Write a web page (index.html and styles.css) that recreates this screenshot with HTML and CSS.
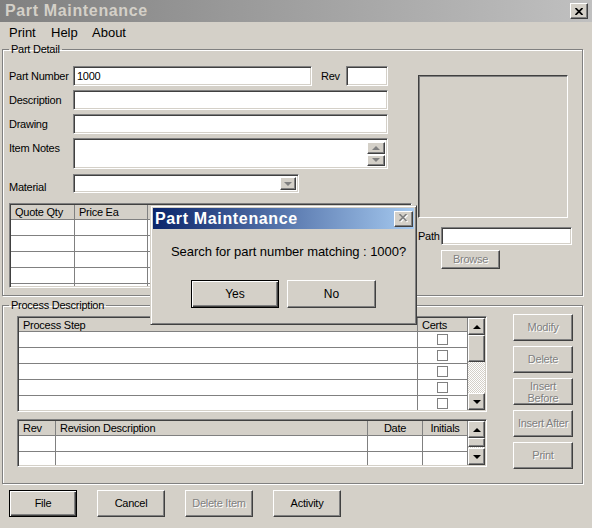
FILE: index.html
```html
<!DOCTYPE html>
<html>
<head>
<meta charset="utf-8">
<link rel="stylesheet" href="styles.css">
</head>
<body>
<div class="titlebar">
  <span class="title">Part Maintenance</span>
  <span class="close-btn raised"><svg width="8" height="7" viewBox="0 0 8 7"><path d="M0.5 0 L7.5 7 M7.5 0 L0.5 7" stroke="#000" stroke-width="1.7" fill="none"/></svg></span>
</div>
<div class="menubar">
  <span class="menu-item m-print">Print</span>
  <span class="menu-item m-help">Help</span>
  <span class="menu-item">About</span>
</div>

<fieldset class="group group-detail">
  <legend>Part Detail</legend>
  <div class="detail-body">
    <div class="detail-left">
      <div class="frow">
        <span class="flabel">Part Number</span>
        <div class="field sunken w-partno">1000</div>
        <span class="rev-label">Rev</span>
        <div class="field sunken w-rev"></div>
      </div>
      <div class="frow">
        <span class="flabel">Description</span>
        <div class="field sunken w-full"></div>
      </div>
      <div class="frow">
        <span class="flabel">Drawing</span>
        <div class="field sunken w-full"></div>
      </div>
      <div class="frow frow-notes">
        <span class="flabel">Item Notes</span>
        <div class="field sunken w-full notes">
          <div class="spin">
            <span class="spin-btn raised"><span class="tri-up gray"></span></span>
            <span class="spin-btn raised"><span class="tri-down gray"></span></span>
          </div>
        </div>
      </div>
      <div class="frow frow-material">
        <span class="flabel">Material</span>
        <div class="field sunken w-combo combo">
          <span class="combo-btn raised"><span class="tri-down gray"></span></span>
        </div>
      </div>
      <div class="listview sunken quote">
        <div class="lv-grid quote-grid">
          <div class="lv-head">Quote Qty</div><div class="lv-head">Price Ea</div><div class="lv-head"></div><div class="lv-head"></div>
          <div></div><div></div><div></div><div></div>
          <div></div><div></div><div></div><div></div>
          <div></div><div></div><div></div><div></div>
          <div></div><div></div><div></div><div></div>
          <div></div><div></div><div></div><div></div>
        </div>
      </div>
    </div>
    <div class="detail-right">
      <div class="picture sunken"></div>
      <div class="path-row">
        <span class="path-label">Path</span>
        <div class="field sunken w-path"></div>
      </div>
      <div class="btn raised disabled browse">Browse</div>
    </div>
  </div>
</fieldset>

<fieldset class="group group-process">
  <legend>Process Description</legend>
  <div class="process-body">
    <div class="process-left">
      <div class="listview sunken steps">
        <div class="lv-grid steps-grid">
          <div class="lv-head">Process Step</div><div class="lv-head">Certs</div>
          <div></div><div class="chk-cell"><span class="chk"></span></div>
          <div></div><div class="chk-cell"><span class="chk"></span></div>
          <div></div><div class="chk-cell"><span class="chk"></span></div>
          <div></div><div class="chk-cell"><span class="chk"></span></div>
          <div></div><div class="chk-cell"><span class="chk"></span></div>
        </div>
        <div class="vscroll">
          <span class="sb-btn raised"><span class="tri-up"></span></span>
          <span class="sb-thumb raised thumb-steps"></span>
          <span class="sb-track"></span>
          <span class="sb-btn raised"><span class="tri-down"></span></span>
        </div>
      </div>
      <div class="listview sunken revs">
        <div class="lv-grid revs-grid">
          <div class="lv-head">Rev</div><div class="lv-head">Revision Description</div><div class="lv-head center">Date</div><div class="lv-head center">Initials</div>
          <div></div><div></div><div></div><div></div>
          <div></div><div></div><div></div><div></div>
        </div>
        <div class="vscroll">
          <span class="sb-btn raised"><span class="tri-up"></span></span>
          <span class="sb-thumb raised thumb-revs"></span>
          <span class="sb-track"></span>
          <span class="sb-btn raised"><span class="tri-down"></span></span>
        </div>
      </div>
    </div>
    <div class="process-right">
      <div class="btn raised disabled side-btn">Modify</div>
      <div class="btn raised disabled side-btn">Delete</div>
      <div class="btn raised disabled side-btn two-line">Insert<br>Before</div>
      <div class="btn raised disabled side-btn">Insert After</div>
      <div class="btn raised disabled side-btn">Print</div>
    </div>
  </div>
</fieldset>

<div class="bottom-bar">
  <div class="btn default bottom-btn">File</div>
  <div class="btn raised bottom-btn">Cancel</div>
  <div class="btn raised disabled bottom-btn">Delete Item</div>
  <div class="btn raised bottom-btn">Activity</div>
</div>

<div class="dialog">
  <div class="dlg-title">
    <span class="dlg-title-text">Part Maintenance</span>
    <span class="dlg-close raised"><svg width="10" height="9" viewBox="0 0 10 9"><path d="M1.5 1 L8.5 8 M8.5 1 L1.5 8" stroke="#fff" stroke-width="1.7" fill="none"/><path d="M0.5 0 L7.5 7 M7.5 0 L0.5 7" stroke="#808080" stroke-width="1.7" fill="none"/></svg></span>
  </div>
  <div class="dlg-msg">Search for part number matching : 1000?</div>
  <div class="dlg-buttons">
    <div class="btn default dlg-btn">Yes</div>
    <div class="btn raised dlg-btn dlg-no">No</div>
  </div>
</div>
</body>
</html>
```

FILE: styles.css
```css
* { box-sizing: border-box; }
html, body { margin: 0; padding: 0; }
body {
  width: 592px;
  height: 528px;
  overflow: hidden;
  position: relative;
  background: #d4d0c8;
  font-family: "Liberation Sans", Arial, sans-serif;
  font-size: 11px;
  letter-spacing: -0.25px;
  color: #000;
}

/* shared 3D styles */
.raised {
  background: #d4d0c8;
  border: 1px solid;
  border-color: #fff #404040 #404040 #fff;
  box-shadow: inset -1px -1px 0 #808080;
}
.sunken {
  border: 1px solid;
  border-color: #808080 #fff #fff #808080;
  box-shadow: inset 1px 1px 0 #404040, inset -1px -1px 0 #d4d0c8;
}
.btn {
  display: flex;
  align-items: center;
  justify-content: center;
  text-align: center;
  line-height: 13px;
}
.btn.default {
  background: #d4d0c8;
  border: 1px solid #000;
  box-shadow: inset 1px 1px 0 #fff, inset -1px -1px 0 #404040, inset -2px -2px 0 #808080;
}
.disabled {
  color: #808080;
  text-shadow: 1px 1px 0 #fff;
}

/* title bar */
.titlebar {
  height: 22px;
  display: flex;
  align-items: center;
  justify-content: space-between;
  padding: 0 4px 0 5px;
  background: linear-gradient(to right, #808080, #c0c0c0);
}
.title {
  font-weight: bold;
  font-size: 16px;
  letter-spacing: 0.65px;
  color: #d4d0c8;
  line-height: 22px;
}
.close-btn {
  width: 18px;
  height: 16px;
  display: flex;
  align-items: center;
  justify-content: center;
}

/* menu */
.menubar {
  height: 20px;
  display: flex;
  align-items: center;
  padding-left: 9px;
  font-size: 13px;
  letter-spacing: 0;
}
.m-print { width: 42px; }
.m-help { width: 41px; }

/* group boxes */
fieldset.group {
  margin: 1px 0 0 2px;
  width: 581px;
  min-width: 0;
  padding: 0;
  border: 1px solid #808080;
  box-shadow: inset 1px 1px 0 #fff, 1px 1px 0 #fff;
}
fieldset.group legend {
  margin-left: 6px;
  padding: 0 2px;
  font-size: 11px;
  line-height: 13px;
}
.group-process { margin-top: 3px !important; }

/* part detail */
.detail-body {
  display: flex;
  padding: 10px 0 7px 6px;
}
.detail-left {
  width: 403px;
  display: flex;
  flex-direction: column;
}
.frow {
  display: flex;
  align-items: center;
  height: 20px;
  margin-bottom: 4px;
}
.flabel { width: 64px; line-height: 13px; }
.rev-label { width: 25px; margin-left: 9px; }
.field {
  height: 100%;
  background: #fff;
  padding: 3px 0 0 3px;
  line-height: 13px;
}
.w-partno { width: 239px; }
.w-rev { width: 42px; }
.w-full { width: 315px; }
.w-combo { width: 226px; }
.frow-notes {
  height: 31px;
  align-items: flex-start;
  margin-bottom: 5px;
}
.frow-notes .flabel { padding-top: 4px; }
.notes {
  display: flex;
  justify-content: flex-end;
  padding: 2px 2px 2px 0;
}
.spin {
  width: 18px;
  display: flex;
  flex-direction: column;
  gap: 1px;
  margin-top: 1px;
}
.spin-btn {
  height: 12px;
  display: flex;
  align-items: center;
  justify-content: center;
}
.frow-material {
  height: 19px;
  align-items: flex-start;
  margin-bottom: 10px;
}
.frow-material .flabel { padding-top: 7px; }
.combo {
  display: flex;
  justify-content: flex-end;
  padding: 2px 2px 2px 0;
}
.combo-btn {
  width: 16px;
  height: 100%;
  display: flex;
  align-items: center;
  justify-content: center;
}

.tri-up, .tri-down {
  width: 0;
  height: 0;
  border-left: 4px solid transparent;
  border-right: 4px solid transparent;
}
.tri-up { border-bottom: 4px solid #000; }
.tri-down { border-top: 4px solid #000; }
.tri-up.gray { border-bottom-color: #808080; }
.tri-down.gray { border-top-color: #808080; }

/* list views */
.listview {
  display: flex;
  background: #fff;
  overflow: hidden;
  padding: 1px;
}
.lv-grid {
  flex: 1;
  display: grid;
  grid-template-rows: 15px;
  grid-auto-rows: 16px;
  align-content: start;
  overflow: hidden;
}
.lv-grid > div {
  border-right: 1px solid #808080;
  border-bottom: 1px solid #808080;
}
.lv-grid > .lv-head {
  background: #d4d0c8;
  padding-left: 4px;
  line-height: 14px;
  white-space: nowrap;
}
.lv-head.center { text-align: center; padding-left: 0; }
.quote { height: 85px; }
.quote-grid { grid-template-columns: 64px 73px 110px 1fr; }

.steps { height: 96px; }
.steps-grid { grid-template-rows: 14px; grid-template-columns: 1fr 50px; }
.revs { height: 48px; margin-top: 7px; }
.revs-grid { grid-template-columns: 37px 1fr 55px 45px; }

.chk-cell {
  display: flex;
  align-items: center;
  justify-content: center;
}
.chk {
  width: 11px;
  height: 11px;
  border: 1px solid #808080;
  background: #fff;
}

.vscroll {
  width: 17px;
  display: flex;
  flex-direction: column;
  background: repeating-conic-gradient(#fff 0 25%, #d4d0c8 0 50%) 0 0 / 2px 2px;
}
.sb-btn {
  height: 17px;
  flex: none;
  display: flex;
  align-items: center;
  justify-content: center;
}
.thumb-steps { height: 27px; flex: none; }
.thumb-revs { height: 9px; flex: none; }
.sb-track { flex: 1; }

/* right column of part detail */
.detail-right {
  margin-left: 6px;
  width: 155px;
  display: flex;
  flex-direction: column;
}
.picture {
  margin-top: 9px;
  width: 150px;
  height: 143px;
  background: #d4d0c8;
  border-color: #404040 #fff #fff #404040;
  box-shadow: inset 1px 1px 0 #808080;
}
.path-row {
  display: flex;
  align-items: center;
  height: 18px;
  margin-top: 9px;
}
.path-label { width: 23px; }
.w-path { width: 131px; }
.browse {
  margin: 5px 0 0 23px;
  width: 59px;
  height: 19px;
}

/* process description */
.process-body {
  display: flex;
  padding: 4px 0 14px 14px;
}
.process-left {
  width: 470px;
  display: flex;
  flex-direction: column;
}
.process-right {
  margin: -2px 0 0 26px;
  width: 60px;
  display: flex;
  flex-direction: column;
  gap: 5px;
}
.side-btn { height: 27px; }
.two-line { line-height: 12px; }

/* bottom buttons */
.bottom-bar {
  display: flex;
  gap: 20px;
  padding-left: 9px;
  margin-top: 6px;
}
.bottom-btn { width: 68px; height: 27px; }

/* dialog */
.dialog {
  position: absolute;
  left: 150px;
  top: 205px;
  width: 267px;
  height: 120px;
  background: #d4d0c8;
  border: 1px solid;
  border-color: #d4d0c8 #404040 #404040 #d4d0c8;
  box-shadow: inset 1px 1px 0 #fff, inset -1px -1px 0 #808080;
  padding: 2px;
  z-index: 10;
}
.dlg-title {
  height: 21px;
  display: flex;
  align-items: center;
  justify-content: space-between;
  padding: 0 1px 0 2px;
  background: linear-gradient(to right, #0a246a, #a6caf0);
}
.dlg-title-text {
  color: #fff;
  font-weight: bold;
  font-size: 16px;
  letter-spacing: 0.65px;
  line-height: 21px;
}
.dlg-close {
  width: 19px;
  height: 16px;
  display: flex;
  align-items: center;
  justify-content: center;
}
.dlg-msg {
  margin-top: 16px;
  padding-left: 18px;
  font-size: 13px;
  letter-spacing: -0.05px;
  line-height: 14px;
}
.dlg-buttons {
  display: flex;
  gap: 8px;
  margin-top: 21px;
  padding-left: 38px;
}
.dlg-btn {
  width: 88px;
  height: 28px;
  font-size: 12px;
  letter-spacing: 0;
}
.dlg-no { width: 89px; }
```
